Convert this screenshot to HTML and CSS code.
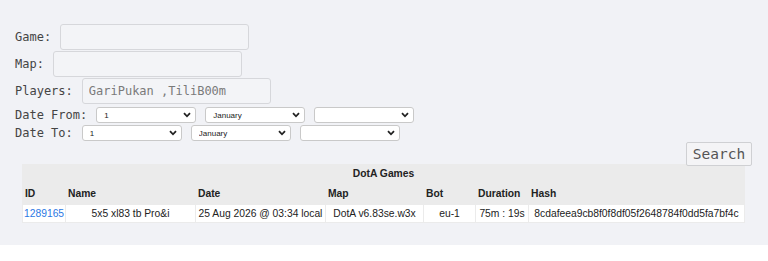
FILE: index.html
```html
<!DOCTYPE html>
<html>
<head>
<meta charset="utf-8">
<link rel="stylesheet" href="styles.css">
</head>
<body>
<div class="page">
  <form class="search">
    <div class="row"><label class="lbl">Game:</label><input class="txt" type="text"></div>
    <div class="row"><label class="lbl">Map:</label><input class="txt" type="text"></div>
    <div class="row"><label class="lbl">Players:</label><input class="txt" type="text" value="GariPukan ,TiliB00m"></div>
    <div class="row date first"><label class="lbl">Date From:</label>
      <select class="sel"><option>1</option></select>
      <select class="sel"><option>January</option></select>
      <select class="sel"><option></option></select>
    </div>
    <div class="row date"><label class="lbl">Date To:</label>
      <select class="sel"><option>1</option></select>
      <select class="sel"><option>January</option></select>
      <select class="sel"><option></option></select>
    </div>
    <div class="actions"><button type="button" class="btn">Search</button></div>
  </form>
  <table class="games">
    <colgroup>
      <col class="c-id"><col class="c-name"><col class="c-date"><col class="c-map"><col class="c-bot"><col class="c-dur"><col class="c-hash">
    </colgroup>
    <thead>
      <tr><th colspan="7" class="title">DotA Games</th></tr>
      <tr class="heads"><th>ID</th><th>Name</th><th>Date</th><th>Map</th><th>Bot</th><th>Duration</th><th>Hash</th></tr>
    </thead>
    <tbody>
      <tr><td class="id"><a href="#">1289165</a></td><td>5x5 xl83 tb Pro&amp;i</td><td>25 Aug 2026 @ 03:34 local</td><td>DotA v6.83se.w3x</td><td>eu-1</td><td>75m : 19s</td><td>8cdafeea9cb8f0f8df05f2648784f0dd5fa7bf4c</td></tr>
    </tbody>
  </table>
</div>
</body>
</html>
```
FILE: styles.css
```css
html, body { margin: 0; padding: 0; background: #ffffff; }
.page {
  background: #f1f2f6;
  padding: 24px 16px 22px 15px;
  height: 199px;
}
.search { display: flex; flex-direction: column; }
.row { display: flex; align-items: center; gap: 9px; height: 26px; margin-bottom: 1px; }
.lbl {
  font-family: "DejaVu Sans Mono", "Liberation Mono", monospace;
  font-size: 12px;
  color: #444;
}
.txt {
  box-sizing: border-box;
  width: 189px;
  height: 26px;
  border: 1px solid #d6d7db;
  border-radius: 3px;
  background: #f3f4f7;
  padding: 0 6px;
  font-family: "DejaVu Sans Mono", "Liberation Mono", monospace;
  font-size: 12px;
  color: #7a7a7a;
  outline: none;
}
.row.date { height: 16px; margin: 0 0 1px 0; gap: 9px; }
.row.date.first { margin-top: 2px; margin-bottom: 2px; }
.sel {
  -webkit-appearance: none;
  appearance: none;
  box-sizing: border-box;
  width: 100px;
  height: 16px;
  border: 1px solid #c9c9c9;
  border-radius: 3px;
  background: #ffffff url("data:image/svg+xml,%3Csvg xmlns='http://www.w3.org/2000/svg' width='8' height='6' viewBox='0 0 8 6'%3E%3Cpath d='M1 1.2 L4 4.3 L7 1.2' fill='none' stroke='%23222' stroke-width='1.8'/%3E%3C/svg%3E") no-repeat right 4px center;
  padding: 0 14px 0 7px;
  font-family: "Liberation Sans", Arial, sans-serif;
  font-size: 8px;
  color: #222;
}
.actions { display: flex; justify-content: flex-end; height: 24px; margin-bottom: -2px; }
.btn {
  box-sizing: border-box;
  width: 66px;
  height: 24px;
  border: 1px solid #cfd0d3;
  border-radius: 2px;
  background: #f4f4f6;
  font-family: "DejaVu Sans Mono", "Liberation Mono", monospace;
  font-size: 14.5px;
  color: #555;
  padding: 0;
}
.games {
  margin-left: 7px;
  width: 723px;
  table-layout: fixed;
  border-collapse: separate;
  border-spacing: 1px;
  background: #ebebeb;
  font-family: "Liberation Sans", Arial, sans-serif;
  font-size: 10.3px;
  color: #222;
}
.c-id { width: 42px; }
.c-name { width: 129px; }
.c-date { width: 129px; }
.c-map { width: 97px; }
.c-bot { width: 51px; }
.c-dur { width: 52px; }
.c-hash { width: 215px; }
.games th { text-align: left; font-weight: bold; padding: 0 2px; line-height: 12px; white-space: nowrap; }
.games th.title { text-align: center; height: 16px; padding-top: 1px; }
.games .heads th { height: 20px; padding-top: 1px; }
.games td {
  background: #ffffff;
  text-align: center;
  padding: 3px 1px 2px;
  height: 12px;
  line-height: 12px;
  white-space: nowrap;
  overflow: hidden;
}
.games td.id { text-align: left; padding-left: 1px; }
.games a { color: #2b78e4; text-decoration: none; }
```
